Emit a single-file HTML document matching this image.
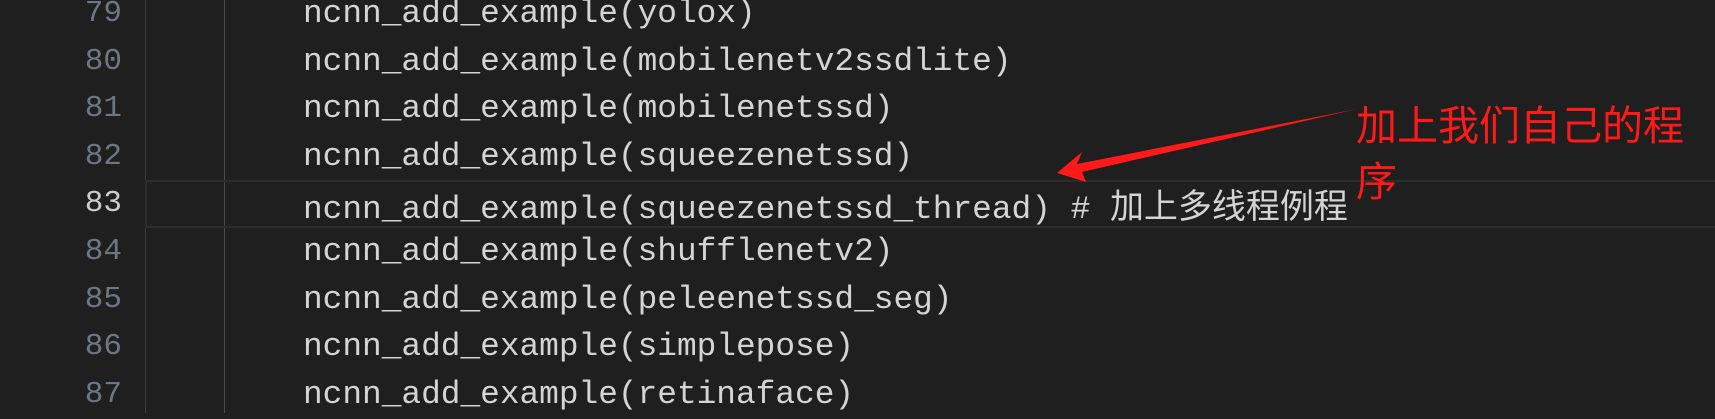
<!DOCTYPE html>
<html><head><meta charset="utf-8"><style>
html,body{margin:0;padding:0;}
body{width:1715px;height:413px;background:#1f1f1f;position:relative;overflow:hidden;font-family:"Liberation Mono","Noto Sans CJK SC",monospace;}
.ln{position:absolute;left:0;width:122px;text-align:right;font-size:31px;color:#6e7681;line-height:48px;}
.ln.act{color:#cccccc;}
.code{position:absolute;left:303px;font-size:32.8px;color:#d4d4d4;line-height:48px;white-space:pre;}
.cjk{font-family:"Noto Sans CJK SC",sans-serif;font-size:34px;}
.hl{position:absolute;left:145px;right:0;top:180px;height:44px;border:2px solid #2c2c2c;border-right:none;}
.g1{position:absolute;left:145px;top:0;width:1px;height:413px;background:#3a3a3a;}
.g2{position:absolute;left:224px;top:0;width:1px;height:413px;background:#4a4a4a;}
.red{position:absolute;left:1356px;top:94px;color:#ff1a1a;font-family:"Noto Sans CJK SC",sans-serif;font-size:41px;line-height:56px;width:360px;}
</style></head><body>
<div class="g1"></div><div class="g2"></div>
<div class="hl"></div>
<div class="ln" style="top:-10px">79</div>
<div class="ln" style="top:37.6px">80</div>
<div class="ln" style="top:85.2px">81</div>
<div class="ln" style="top:132.8px">82</div>
<div class="ln act" style="top:180.4px">83</div>
<div class="ln" style="top:228px">84</div>
<div class="ln" style="top:275.6px">85</div>
<div class="ln" style="top:323.2px">86</div>
<div class="ln" style="top:370.8px">87</div>
<div class="code" style="top:-10px">ncnn_add_example(yolox)</div>
<div class="code" style="top:37.6px">ncnn_add_example(mobilenetv2ssdlite)</div>
<div class="code" style="top:85.2px">ncnn_add_example(mobilenetssd)</div>
<div class="code" style="top:132.8px">ncnn_add_example(squeezenetssd)</div>
<div class="code" style="top:180.4px">ncnn_add_example(squeezenetssd_thread) # <span class="cjk">加上多线程例程</span></div>
<div class="code" style="top:228px">ncnn_add_example(shufflenetv2)</div>
<div class="code" style="top:275.6px">ncnn_add_example(peleenetssd_seg)</div>
<div class="code" style="top:323.2px">ncnn_add_example(simplepose)</div>
<div class="code" style="top:370.8px">ncnn_add_example(retinaface)</div>
<div class="red">加上我们自己的程<br>序</div>
<svg style="position:absolute;left:0;top:0" width="1715" height="413">
<polygon points="1357,109 1077,164 1082,152 1057,173 1086,182 1082,172" fill="#ff1a1a"/>
</svg>
</body></html>
